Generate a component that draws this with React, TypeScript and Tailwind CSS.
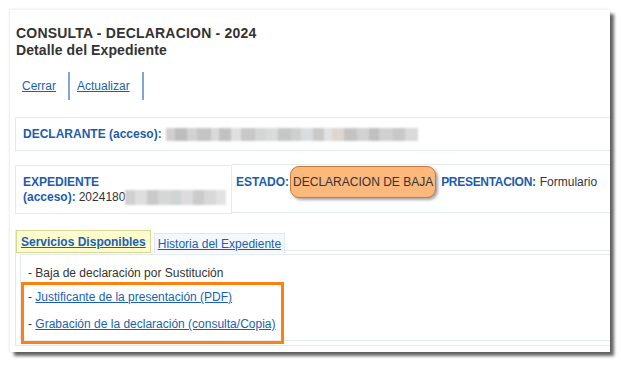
import React from "react";

const declaranteBlur = [
  "w-[9px] bg-[#cfcfcf]",
  "w-[12px] bg-[#bdbdbd]",
  "w-[10px] bg-[#d2d2d2]",
  "w-[14px] bg-[#c4c4c4]",
  "w-[8px] bg-[#dadada]",
  "w-[12px] bg-[#c1c1c1]",
  "w-[10px] bg-[#e0e0e0]",
  "w-[14px] bg-[#c8c8c8]",
  "w-[11px] bg-[#d5d5d5]",
  "w-[12px] bg-[#d6dce0]",
  "w-[13px] bg-[#c6c6c6]",
  "w-[10px] bg-[#cfcfcf]",
  "w-[12px] bg-[#d8dde2]",
  "w-[11px] bg-[#c9c9c9]",
  "w-[8px] bg-[#e2e2e2]",
  "w-[12px] bg-[#ded6cf]",
  "w-[13px] bg-[#c3c3c3]",
  "w-[12px] bg-[#d2d2d2]",
  "w-[10px] bg-[#c0c0c0]",
  "w-[14px] bg-[#d0d0d0]",
  "w-[12px] bg-[#c8c8c8]",
  "w-[13px] bg-[#d9d9d9]",
];

const expedienteBlur = [
  "w-[10px] bg-[#d0d0d0]",
  "w-[12px] bg-[#dedede]",
  "w-[11px] bg-[#c9c9c9]",
  "w-[13px] bg-[#d6d6d6]",
  "w-[10px] bg-[#cfd4d6]",
  "w-[12px] bg-[#dcdcdc]",
  "w-[11px] bg-[#cbcbcb]",
  "w-[12px] bg-[#d8d8d8]",
  "w-[10px] bg-[#e2e2e2]",
];

const Blur = ({ parts, h }: { parts: string[]; h: string }) => (
  <span className={`inline-flex ${h} blur-[1px]`}>
    {parts.map((p, i) => (
      <span key={i} className={`h-full ${p}`} />
    ))}
  </span>
);

const App: React.FC = () => {
  return (
    <div className="w-[621px] h-[365px] bg-white pt-[10px] pl-[10px] font-['Liberation_Sans',Arial,sans-serif] text-[12px] text-[#333]">
      <div className="w-[600px] h-[342px] bg-white overflow-hidden shadow-[4px_4px_3px_rgba(0,0,0,0.6),0_0_3px_rgba(0,0,0,0.15)] pt-[15px]">
        {/* header */}
        <div className="pl-[6px] text-[14px] leading-[17px] font-bold text-[#333]">
          <div className="tracking-[0.2px]">CONSULTA - DECLARACION - 2024</div>
          <div className="tracking-[0.1px]">Detalle del Expediente</div>
        </div>

        <div className="flex h-[28px] items-center mt-[13px] pl-[12px]">
          <a href="#" className="text-[#1a5fb4] underline">
            Cerrar
          </a>
          <span className="ml-[12px] w-[2px] self-stretch bg-[#7fa6d6]" />
          <a href="#" className="ml-[7px] text-[#1a5fb4] underline">
            Actualizar
          </a>
          <span className="ml-[12px] w-[2px] self-stretch bg-[#7fa6d6]" />
        </div>

        {/* declarante */}
        <div className="ml-[5px] mt-[17px] h-[34px] flex items-center border border-r-0 border-[#e3eaf1] pl-[7px]">
          <span className="font-bold text-[#1c5cae]">DECLARANTE (acceso):</span>
          <span className="ml-[4px] flex">
            <Blur parts={declaranteBlur} h="h-[13px]" />
          </span>
        </div>

        {/* expediente / estado */}
        <div className="ml-[5px] mt-[13px] flex">
          <div className="mt-[1px] w-[217px] h-[49px] border border-[#e3eaf1] pl-[7px] pt-[9px] leading-[15px]">
            <div className="font-bold text-[#1c5cae]">EXPEDIENTE</div>
            <div className="flex items-center">
              <span className="font-bold text-[#1c5cae]">(acceso):</span>
              <span className="ml-[3px]">2024180</span>
              <Blur parts={expedienteBlur} h="h-[15px]" />
            </div>
          </div>
          <div className="flex-1 h-[49px] border-y border-[#e3eaf1]">
            <div className="flex items-center h-[33px] pl-[4px]">
              <span className="font-bold text-[#1c5cae]">ESTADO:</span>
              <span className="ml-[1px] h-[32px] px-[2px] flex items-center rounded-[9px] border border-[#c47a38] bg-[#fdb87b] text-[#333] shadow-[2px_2px_3px_rgba(0,0,0,0.35)]">
                DECLARACION DE BAJA
              </span>
              <span className="ml-[5px] font-bold text-[#1c5cae] tracking-[-0.3px]">PRESENTACION:</span>
              <span className="ml-[4px] text-[#333]">Formulario</span>
            </div>
          </div>
        </div>

        {/* tabs */}
        <div className="ml-[5px] mt-[16px] border-l border-b border-[#e3eaf1] pb-[4px]">
          <div className="flex items-end">
            <div className="h-[23px] px-[4px] flex items-center border border-[#d8d893] bg-[#fbfbcf]">
              <a href="#" className="font-bold text-[#1a5fb4] underline">
                Servicios Disponibles
              </a>
            </div>
            <div className="ml-[3px] h-[20px] px-[3px] flex items-center border border-b-0 border-[#e0e7ee] bg-[#f5f8fb]">
              <a href="#" className="text-[#1a5fb4] underline">
                Historia del Expediente
              </a>
            </div>
            <div className="flex-1 mb-[2px] border-b border-[#e3eaf1]" />
          </div>

          <div className="ml-[4px] mt-[1px] border-t border-l border-b border-[#e3eaf1]">
            <div className="pl-[7px] pt-[11px] leading-[14px]">- Baja de declaración por Sustitución</div>
            <div className="relative mt-[2px] -mb-[4px] w-[263px] border-[3px] border-[#ff7f0f] pl-[4px] pt-[5px] pb-[10px] leading-[14px]">
              <div>
                -{" "}
                <a href="#" className="text-[#1a5fb4] underline">
                  Justificante de la presentación (PDF)
                </a>
              </div>
              <div className="mt-[13px]">
                -{" "}
                <a href="#" className="text-[#1a5fb4] underline">
                  Grabación de la declaración (consulta/Copia)
                </a>
              </div>
            </div>
          </div>
        </div>
      </div>
    </div>
  );
};

export default App;
